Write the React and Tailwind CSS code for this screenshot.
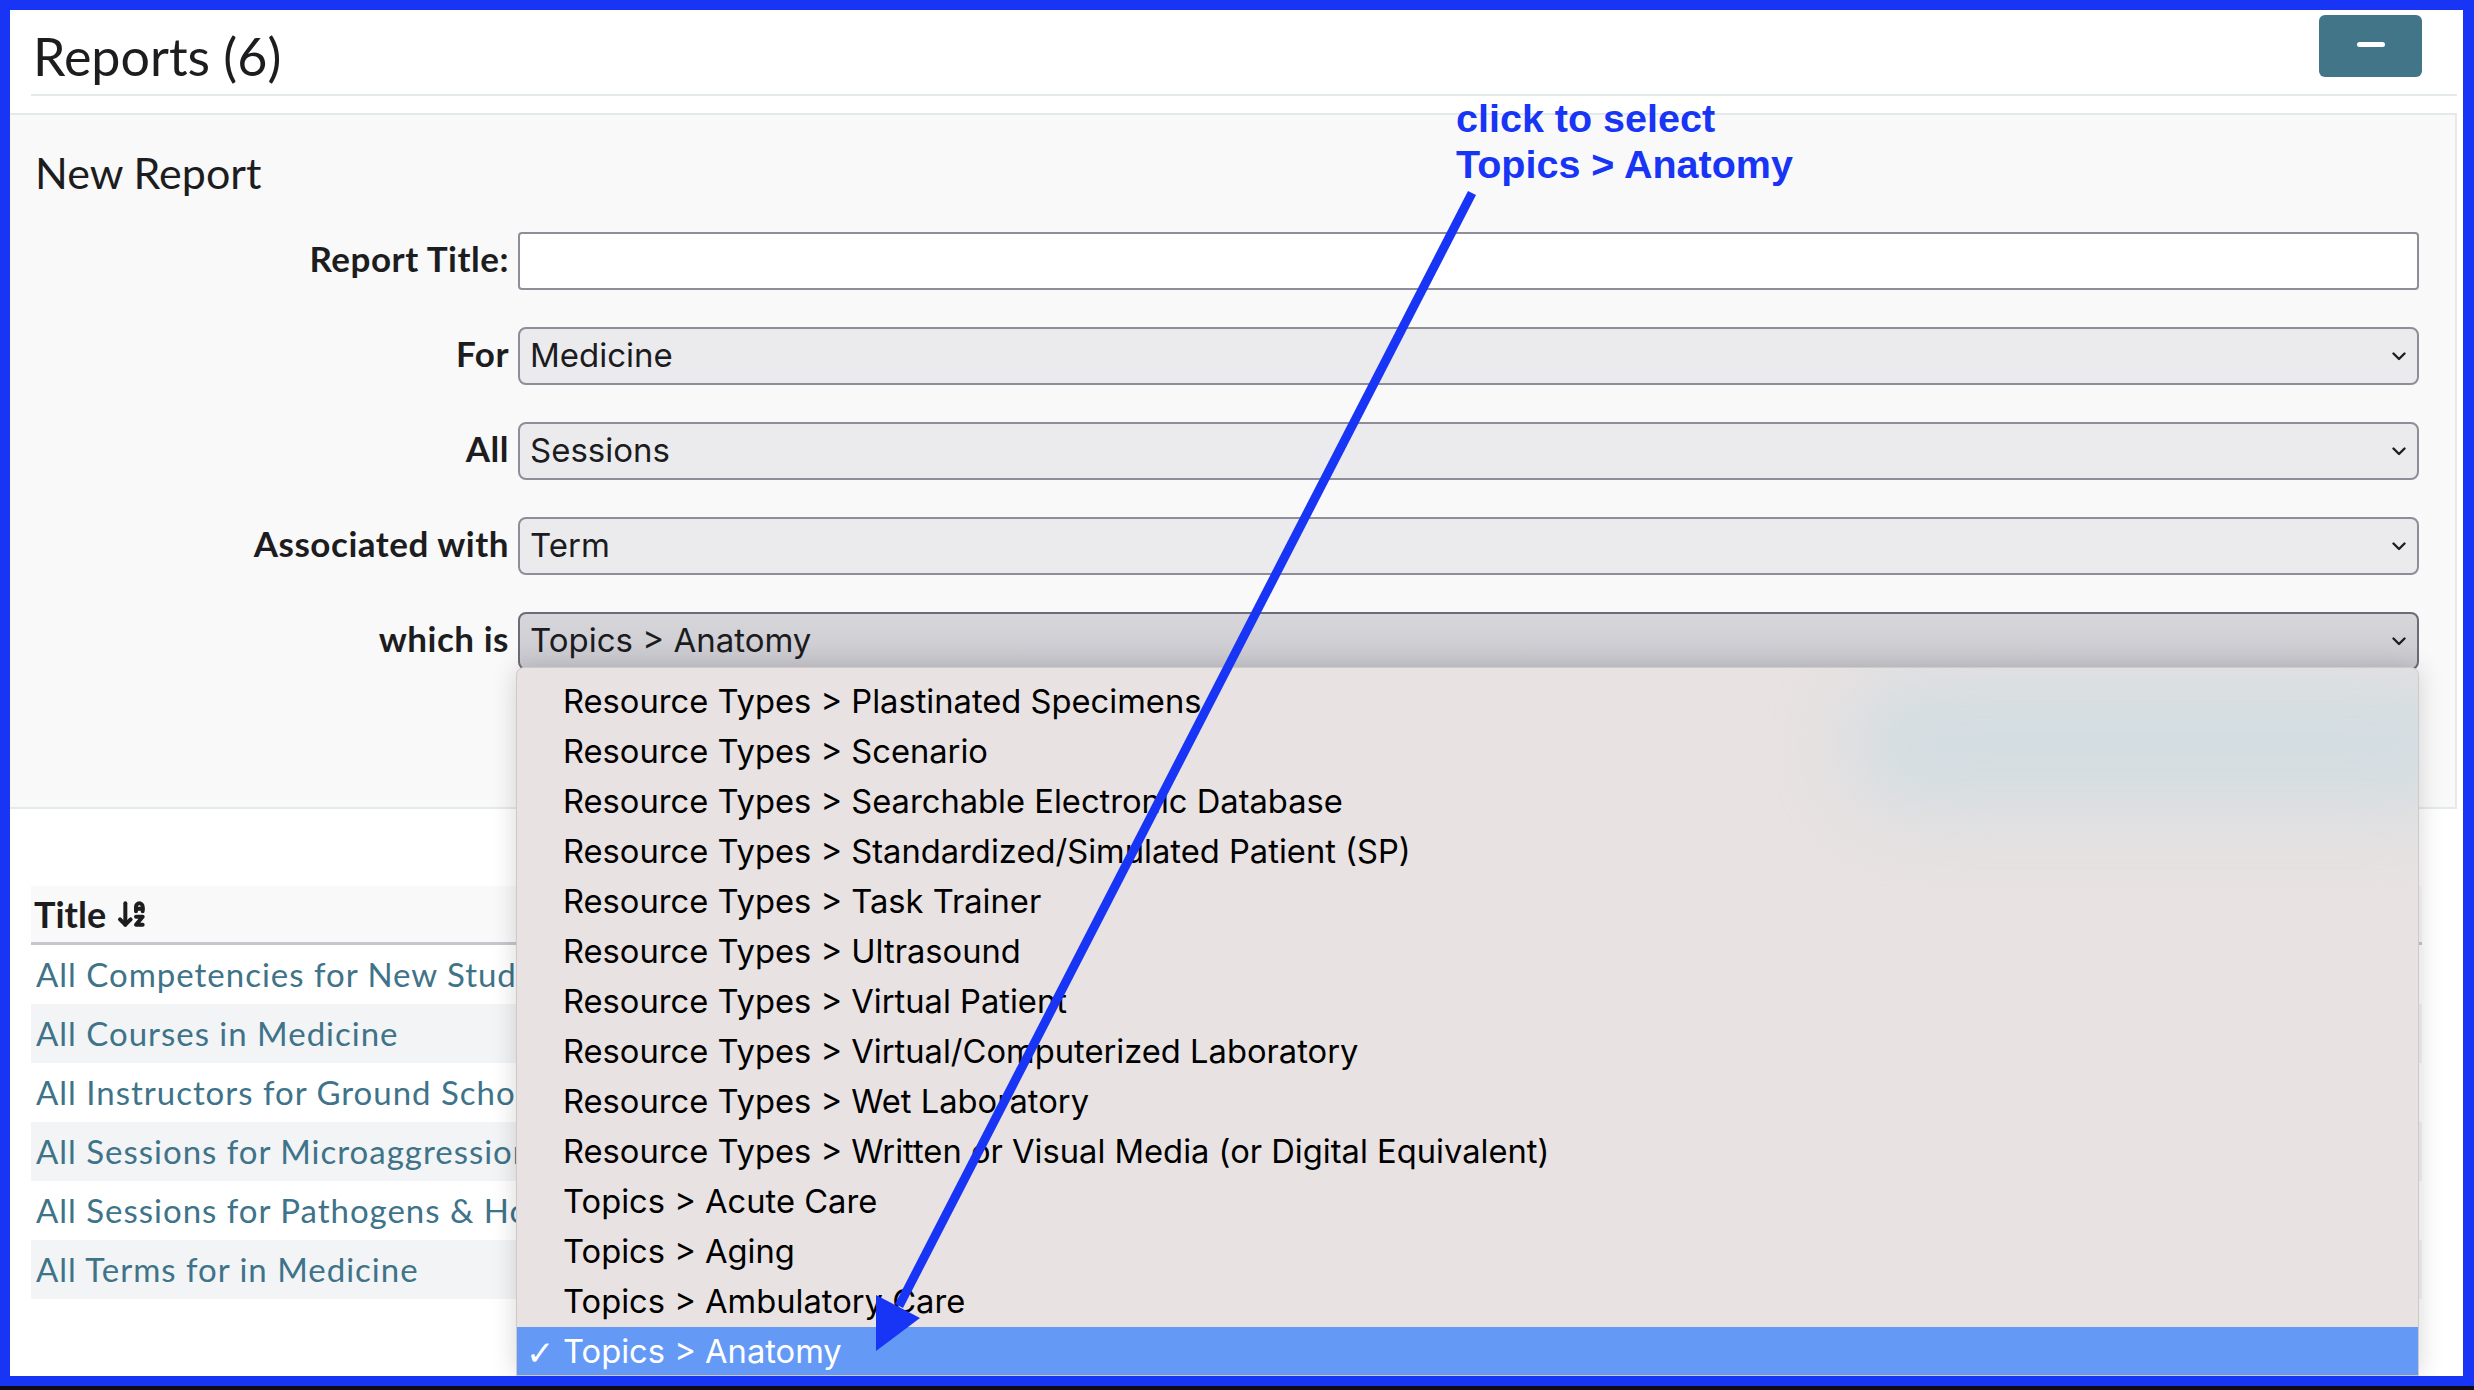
import React from 'react';
import { ArrowDownAZ } from 'lucide-react';

const page = { fontFamily: 'Lato, "Open Sans", sans-serif' };
const sys = { fontFamily: 'Inter, Roboto, sans-serif' };

const options = [
  'Resource Types > Plastinated Specimens',
  'Resource Types > Scenario',
  'Resource Types > Searchable Electronic Database',
  'Resource Types > Standardized/Simulated Patient (SP)',
  'Resource Types > Task Trainer',
  'Resource Types > Ultrasound',
  'Resource Types > Virtual Patient',
  'Resource Types > Virtual/Computerized Laboratory',
  'Resource Types > Wet Laboratory',
  'Resource Types > Written or Visual Media (or Digital Equivalent)',
  'Topics > Acute Care',
  'Topics > Aging',
  'Topics > Ambulatory Care',
];

const reports = [
  'All Competencies for New Students in Medicine',
  'All Courses in Medicine',
  'All Instructors for Ground School in Medicine',
  'All Sessions for Microaggressions in Medicine',
  'All Sessions for Pathogens & Host Defense',
  'All Terms for in Medicine',
];

const Chevron = () => (
  <svg width="14" height="9" viewBox="0 0 14 9" className="mr-[11px] shrink-0">
    <path d="M1.5 1.5 L7 7 L12.5 1.5" fill="none" stroke="#1f1f22" strokeWidth="2.4" strokeLinecap="round" strokeLinejoin="round" />
  </svg>
);

const FormRow = ({ label, children }) => (
  <div className="flex items-center h-[58px]">
    <label className="w-[474px] text-right font-bold text-[35px] text-[#1d1d1f] tracking-[0.015em] pb-[6px]" style={page}>
      {label}
    </label>
    <div className="ml-[9px] flex-1 h-full">{children}</div>
  </div>
);

const Select = ({ value, active }) => (
  <div
    className={`h-full flex items-center justify-between rounded-[8px] border-2 ${
      active
        ? 'border-[#6d6c76] bg-gradient-to-b from-[#d6d6db] to-[#c9c9cf]'
        : 'border-[#8f8e98] bg-[#ebebee]'
    }`}
  >
    <span className="pl-[10px] text-[33px] text-[#1c1c1e]" style={sys}>{value}</span>
    <Chevron />
  </div>
);

export default function App() {
  return (
    <div className="relative w-[2474px] h-[1390px] bg-[#0c0c12] overflow-hidden">
      <div className="relative h-[1386px] border-t-[10px] border-l-[10px] border-r-[11px] border-b-[10px] border-[#1834f5] bg-white overflow-hidden">
        {/* header */}
        <div className="ml-[21px] mr-[6px] h-[86px] border-b-2 border-[#e4e9e9] flex justify-between items-start pl-[2px] pr-[35px]">
          <h1 className="mt-[16px] text-[52px] leading-[60px] text-[#1d1d1f]" style={page}>Reports (6)</h1>
          <button className="mt-[5px] w-[103px] h-[62px] rounded-[6px] bg-[#437589] flex items-center justify-center">
            <span className="block w-[28px] h-[5px] rounded-full bg-white mb-[3px]"></span>
          </button>
        </div>

        {/* new report panel */}
        <div className="mt-[17px] mr-[6px] h-[696px] border-t-2 border-r-2 border-b-2 border-[#e4e9e9] bg-[#f9f9f9] pl-[25px] pr-[36px]">
          <h2 className="pt-[33px] text-[43px] leading-[50px] text-[#1d1d1f]" style={page}>New Report</h2>
          <div className="mt-[34px] flex flex-col gap-[37px]">
            <FormRow label="Report Title:">
              <div className="h-full rounded-[4px] border-2 border-[#8f8e98] bg-white"></div>
            </FormRow>
            <FormRow label="For">
              <Select value="Medicine" />
            </FormRow>
            <FormRow label="All">
              <Select value="Sessions" />
            </FormRow>
            <FormRow label="Associated with">
              <Select value="Term" />
            </FormRow>
            <FormRow label="which is">
              <Select value="Topics > Anatomy" active />
            </FormRow>
          </div>
          <div className="mt-[53px] flex justify-end">
            <button className="w-[420px] h-[59px] rounded-[6px] bg-[#2c5f73] text-white text-[32px]" style={page}>Done</button>
          </div>
        </div>

        {/* reports table */}
        <div className="mt-[77px] ml-[21px] mr-[41px]" style={page}>
          <div className="h-[59px] bg-[#f9f9f9] border-b-[3px] border-[#c4c8cc] flex items-center pl-[3px]">
            <span className="font-bold text-[36px] text-[#1d1d1f]">Title</span>
            <ArrowDownAZ size={32} strokeWidth={3} className="ml-[10px] text-[#1d1d1f]" />
          </div>
          {reports.map((r, i) => (
            <div key={i} className={`h-[59px] flex items-center pl-[5px] ${i % 2 === 1 ? 'bg-[#f3f4f6]' : 'bg-white'}`}>
              <a className="text-[33px] tracking-[0.03em] text-[#3e7389]">{r}</a>
            </div>
          ))}
        </div>

        {/* open select menu */}
        <div className="absolute left-[506px] top-[657px] w-[1903px] bottom-0 bg-[#e8e2e2] rounded-t-[8px] border border-[#cfcaca] shadow-[0_0_26px_rgba(0,0,0,0.16)] overflow-hidden pt-[9px]" style={sys}>
          <div className="absolute left-[1330px] top-[5px] w-[640px] h-[140px] rounded-full bg-[#d3dde1] blur-[36px]"></div>
          {options.map((o) => (
            <div key={o} className="relative h-[50px] flex items-center pl-[46px] text-[32.7px] text-black">
              {o}
            </div>
          ))}
          <div className="relative h-[50px] flex items-center pl-[46px] text-[32.7px] text-white bg-[#649af6]">
            <span className="absolute left-[9px] top-[9px] text-[34px] leading-none" style={{ fontFamily: '"DejaVu Sans", sans-serif' }}>✓</span>
            Topics &gt; Anatomy
          </div>
        </div>
      </div>

      {/* annotation */}
      <div
        className="absolute left-[1456px] top-[95px] text-[39.5px] leading-[46px] font-bold text-[#1834f5]"
        style={{ fontFamily: '"Liberation Sans", Arial, sans-serif' }}
      >
        <div>click to select</div>
        <div>Topics &gt; Anatomy</div>
      </div>
      <svg className="absolute left-0 top-0 pointer-events-none" width="2474" height="1390">
        <line x1="1472" y1="193" x2="899" y2="1306" stroke="#1834f5" strokeWidth="9" />
        <polygon points="876,1295 920,1318 876,1351" fill="#1834f5" />
      </svg>
    </div>
  );
}
